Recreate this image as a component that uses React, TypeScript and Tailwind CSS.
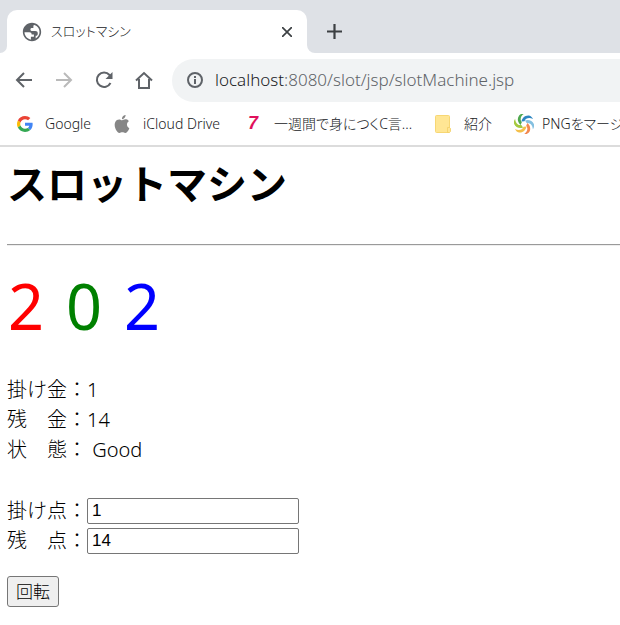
import React from "react";

const ui = "font-['Noto_Sans','Noto_Sans_CJK_JP',sans-serif]";

function Globe() {
  return (
    <svg viewBox="0 0 24 24" className="size-[22px] shrink-0" fill="#5f6368" aria-hidden="true">
      <path d="M12 2C6.48 2 2 6.48 2 12s4.48 10 10 10 10-4.48 10-10S17.52 2 12 2zm0 18.2c-4.5 0-8.100-3.600-8.200-8h5.200c1.800 0 2.600.9 2.600 2.400h2.500v2.600h-3.300v2.800c.4.100.8.200 1.200.2zm4-1.100v-3c1.700 0 2.300-1 2.300-2.500 0-1.700-1-2.600-2.800-2.600h-3.200c-1.400 0-2-.7-2-1.700 0-1.200.8-1.700 2-1.700h1.200V5.500c0-.6.500-1 1.200-1.100 3.200 1 5.500 4 5.500 7.600 0 3.100-1.700 5.700-4.200 7.100z" />
    </svg>
  );
}

function GoogleLogo() {
  return (
    <svg viewBox="0 0 48 48" className="size-4 shrink-0" aria-hidden="true">
      <path fill="#ea4335" d="M24 9.500c3.540 0 6.710 1.220 9.210 3.600l6.850-6.850C35.900 2.380 30.470 0 24 0 14.620 0 6.510 5.380 2.560 13.220l7.980 6.190C12.430 13.720 17.740 9.500 24 9.500z" />
      <path fill="#4285f4" d="M46.980 24.550c0-1.570-.15-3.090-.38-4.550H24v9.020h12.940c-.58 2.960-2.260 5.480-4.780 7.180l7.730 6c4.510-4.180 7.090-10.360 7.090-17.650z" />
      <path fill="#fbbc05" d="M10.530 28.590c-.48-1.450-.76-2.990-.76-4.590s.27-3.140.76-4.590l-7.980-6.190C.92 16.460 0 20.120 0 24c0 3.880.92 7.540 2.560 10.780l7.970-6.190z" />
      <path fill="#34a853" d="M24 48c6.480 0 11.930-2.130 15.890-5.810l-7.730-6c-2.150 1.450-4.920 2.300-8.160 2.300-6.260 0-11.570-4.220-13.470-9.910l-7.980 6.190C6.510 42.620 14.620 48 24 48z" />
    </svg>
  );
}

function AppleLogo() {
  return (
    <svg viewBox="0 0 24 24" className="size-[18px] shrink-0" fill="#868686" aria-hidden="true">
      <path d="M12.152 6.896c-.948 0-2.415-1.078-3.960-1.040-2.040.027-3.910 1.183-4.961 3.014-2.117 3.675-.546 9.103 1.519 12.090 1.013 1.454 2.208 3.090 3.792 3.039 1.520-.065 2.090-.987 3.935-.987 1.831 0 2.350.987 3.960.948 1.637-.026 2.676-1.480 3.676-2.948 1.156-1.688 1.636-3.325 1.662-3.415-.039-.013-3.182-1.221-3.220-4.857-.026-3.040 2.480-4.494 2.597-4.559-1.429-2.090-3.623-2.324-4.390-2.376-2-.156-3.675 1.090-4.610 1.090zM15.530 3.830c.843-1.012 1.400-2.427 1.245-3.830-1.207.052-2.662.805-3.532 1.818-.780.896-1.454 2.338-1.273 3.714 1.338.104 2.715-.688 3.559-1.701" />
    </svg>
  );
}

function Folder() {
  return (
    <svg viewBox="0 0 18 20" className="h-5 w-[18px] shrink-0" aria-hidden="true">
      <rect x="1.500" y="1.500" width="14" height="17" rx="1" fill="#ffe694" stroke="#f7d774" />
      <path d="M13.500 13.500h2l1 1v3l-1 1h-2z" fill="#ffe694" stroke="#f2cf66" strokeWidth="0.8" />
    </svg>
  );
}

function Swirl() {
  const arms = ["#2f86c1", "#84c0e0", "#f2884f", "#f4bf4a", "#a5c93f", "#4fa84e"];
  return (
    <svg viewBox="-10 -10 20 20" className="size-5 shrink-0" aria-hidden="true">
      {arms.map((c, i) => (
        <path key={c} fill={c} transform={`rotate(${i * 60})`} d="M-2.500-2.500C-2-6 1-9 5-8.500 7-8 8.500-6.500 9-5 5.500-7 1.500-6 .5-2.800z" />
      ))}
    </svg>
  );
}

function Toolbar() {
  const nav = "flex size-10 items-center justify-center";
  return (
    <div className="flex h-[49px] items-center bg-white pt-[5px] pl-1">
      <button aria-label="戻る" className={nav}>
        <svg viewBox="0 0 18 18" className="size-[18px]" fill="none" stroke="#5f6368" strokeWidth="2"><path d="M17 9H2M9 2 2 9l7 7" /></svg>
      </button>
      <button aria-label="進む" className={nav}>
        <svg viewBox="0 0 18 18" className="size-[18px]" fill="none" stroke="#bababa" strokeWidth="2"><path d="M1 9h15M9 2l7 7-7 7" /></svg>
      </button>
      <button aria-label="再読み込み" className={nav}>
        <svg viewBox="0 0 18 18" className="size-[18px]" fill="none" stroke="#5f6368" strokeWidth="2"><path d="M15.500 12A7.200 7.200 0 1 1 14.500 4L16 6" /><path d="M17.500 1v7h-7z" fill="#5f6368" stroke="none" /></svg>
      </button>
      <button aria-label="ホーム" className={nav}>
        <svg viewBox="0 0 18 18" className="size-[18px]" fill="none" stroke="#5f6368" strokeWidth="2"><path d="M1 9.500 9 2l8 7.500M4 8v9h10V8" /></svg>
      </button>
      <div className="ml-2 flex h-[43px] min-w-0 flex-1 items-center rounded-l-full bg-[#f1f3f4] pl-[14px]">
        <svg viewBox="0 0 18 18" className="size-[18px] shrink-0" fill="none" stroke="#5f6368" strokeWidth="2"><circle cx="9" cy="9" r="7" /><path d="M9 8v5M9 5v2" /></svg>
        <a href="#" className="ml-[11px] text-[17px] leading-6 font-light whitespace-nowrap text-[#5f6368]"><span className="text-[#202124]">localhost</span>:8080/slot/jsp/slotMachine.jsp</a>
      </div>
    </div>
  );
}

function Bookmarks() {
  const item = "flex shrink-0 items-center";
  return (
    <nav className="flex h-[45px] items-center overflow-hidden border-b-2 border-[#dcdcdc] bg-white pl-[17px] text-[14px] font-light whitespace-nowrap text-[#202124]">
      <a href="#" className={item}><GoogleLogo /><span className="ml-3">Google</span></a>
      <a href="#" className={`${item} ml-[22px]`}><AppleLogo /><span className="ml-3">iCloud Drive</span></a>
      <a href="#" className={`${item} ml-7`}><span className="w-[14px] font-['Liberation_Sans',sans-serif] text-[18px] font-bold text-[#e0105c] italic">7</span><span className="ml-3 [font-feature-settings:'palt']">一週間で身につくC言...</span></a>
      <a href="#" className={`${item} ml-[22px]`}><Folder /><span className="ml-3">紹介</span></a>
      <a href="#" className={`${item} ml-[22px]`}><Swirl /><span className="ml-2 [font-feature-settings:'palt']">PNGをマージ</span></a>
    </nav>
  );
}

function Field({ label, value }: { label: string; value: string }) {
  return (
    <label className="flex h-[30px] items-center">
      <span className="w-20 shrink-0">{label}</span>
      <input defaultValue={value} className="h-[26px] w-[212px] rounded-[2px] border border-[#767676] bg-white px-1 font-['Liberation_Sans',sans-serif] text-[17px] font-normal" />
    </label>
  );
}

export default function App() {
  return (
    <div className={`min-h-screen overflow-hidden bg-white text-black ${ui}`}>
      <header>
        <div className="flex h-[53px] items-end bg-[#dee1e6]">
          <div className="h-[43px] w-[7px] bg-white"><div className="h-full rounded-br-lg bg-[#dee1e6]" /></div>
          <div className="flex h-[43px] w-[300px] items-center rounded-t-[10px] bg-white pr-[11px] pl-[14px]">
            <Globe />
            <span className="ml-2 flex-1 text-[13px] font-light text-[#202124] [font-feature-settings:'palt']">スロットマシン</span>
            <button aria-label="タブを閉じる" className="p-1"><svg viewBox="0 0 10 10" className="size-[10px]" stroke="#3c4043" strokeWidth="1.7"><path d="m0 0 10 10M10 0 0 10" /></svg></button>
          </div>
          <div className="h-[43px] w-3 bg-white"><div className="h-full rounded-bl-lg bg-[#dee1e6]" /></div>
          <button aria-label="新しいタブ" className="flex h-[43px] items-center px-2"><svg viewBox="0 0 15 15" className="size-[15px]" stroke="#3c4043" strokeWidth="2.200"><path d="M7.500 0v15M0 7.500h15" /></svg></button>
        </div>
        <Toolbar />
        <Bookmarks />
      </header>
      <main className="pl-[7px] text-[20px] leading-[30px] font-light">
        <h1 className="pt-[7px] text-[40px] leading-[60px] font-bold">スロットマシン</h1>
        <hr className="mt-[30px] h-[2px] border-t border-b border-t-[#9a9a9a] border-b-[#eeeeee]" />
        <div className="mt-4 flex gap-[22px] pl-px text-[63px] leading-[88px] font-normal">
          <span className="text-[#ff0000]">2</span>
          <span className="text-[#008000]">0</span>
          <span className="text-[#0000ff]">2</span>
        </div>
        <div className="mt-[25px]">
          <p>掛け金：1</p>
          <p>残　金：14</p>
          <p>状　態： Good</p>
        </div>
        <form className="mt-[31px]" onSubmit={(e) => e.preventDefault()}>
          <Field label="掛け点：" value="1" />
          <Field label="残　点：" value="14" />
          <button className="mt-5 flex h-[31px] w-[52px] items-center justify-center rounded-[3px] border border-[#767676] bg-[#efefef] text-[17px]">回転</button>
        </form>
      </main>
    </div>
  );
}
